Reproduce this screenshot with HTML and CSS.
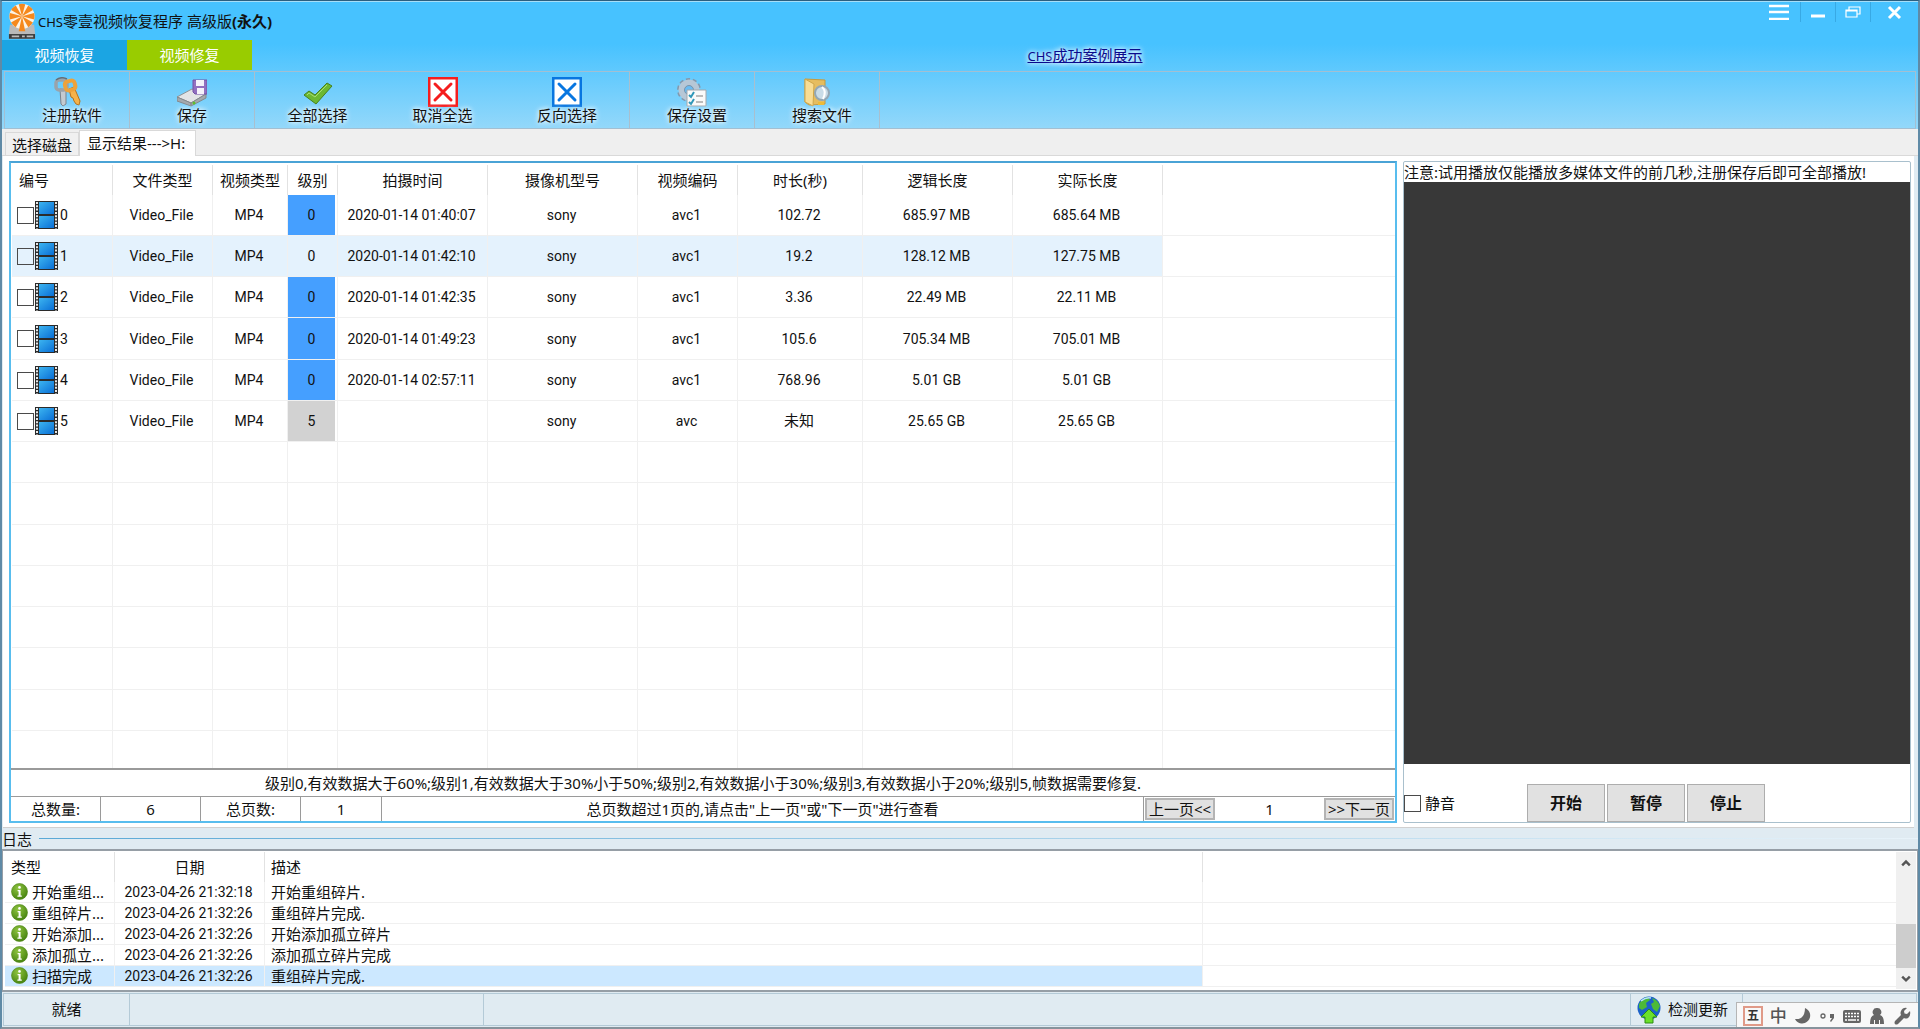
FILE: index.html
```html
<!DOCTYPE html>
<html lang="zh-CN">
<head>
    <meta charset="UTF-8">
    <meta name="viewport" content="width=device-width, initial-scale=1.0">
    <title>CHS零壹视频恢复程序</title>
    <link rel="stylesheet" href="styles.css">
</head>
<body>
    <!-- shared icons -->
    <svg width="0" height="0" class="sprite" aria-hidden="true">
        <defs>
            <linearGradient id="filmBlue" x1="0" y1="0" x2="1" y2="1">
                <stop offset="0" stop-color="#3cb4f0"/>
                <stop offset="1" stop-color="#0a6fd6"/>
            </linearGradient>
            <radialGradient id="infoGreen" cx="0.4" cy="0.3" r="0.8">
                <stop offset="0" stop-color="#8fc440"/>
                <stop offset="1" stop-color="#3f7d0a"/>
            </radialGradient>
        </defs>
        <symbol id="film" viewBox="0 0 23 28">
            <rect x="0" y="0" width="23" height="28" fill="#2b2b2b"/>
            <rect x="4" y="1" width="15" height="12" fill="url(#filmBlue)"/>
            <rect x="4" y="15" width="15" height="12" fill="url(#filmBlue)"/>
            <path d="M2 1v27M21 1v27" stroke="#e8e8e8" stroke-width="2" stroke-dasharray="2 1.3"/>
        </symbol>
        <symbol id="info" viewBox="0 0 17 17">
            <circle cx="8.5" cy="8.5" r="8" fill="url(#infoGreen)" stroke="#4c8412" stroke-width="0.6"/>
            <circle cx="8.5" cy="4.4" r="1.3" fill="#fff"/>
            <path d="M6.6 7h3v5.4h1.2v1.3H6.4v-1.3h1.2V8.3h-1z" fill="#fff"/>
        </symbol>
    </svg>

    <div class="window">
        <header class="top">
            <div class="title-bar">
                <svg class="logo" viewBox="0 0 30 38">
                    <path d="M2 23h26l1 9v6H1v-6z" fill="#b9b9b9"/>
                    <path d="M1 33h28v5H1z" fill="#3a3a3a"/>
                    <path d="M4 35.500h8M15 35.500h3M20 35.500h7" stroke="#bbb" stroke-width="2"/>
                    <circle cx="15" cy="14" r="13.500" fill="#fdf3e4"/>
                    <g fill="#f5891d">
                        <path d="M15 14 11.500 1a13.500 13.500 0 0 1 7 0z"/>
                        <path d="M15 14 21.700 2.300a13.500 13.500 0 0 1 5 5z"/>
                        <path d="M15 14 28 10.500a13.500 13.500 0 0 1 0 7z"/>
                        <path d="M15 14 26.700 20.700a13.500 13.500 0 0 1-5 5z"/>
                        <path d="M15 14 18.500 30h-7z"/>
                        <path d="M15 14 8.300 25.700a13.500 13.500 0 0 1-5-5z"/>
                        <path d="M15 14 2 17.500a13.500 13.500 0 0 1 0-7z"/>
                        <path d="M15 14 3.300 7.300a13.500 13.500 0 0 1 5-5z"/>
                    </g>
                </svg>
                <h1><span class="latin">CHS</span>零壹视频恢复程序 高级版<b>(永久)</b></h1>
                <div class="window-controls">
                    <button type="button" aria-label="菜单"><svg viewBox="0 0 20 16"><path d="M0 2h20M0 8h20M0 15h20" stroke="#fff" stroke-width="2.500"/></svg></button>
                    <button type="button" aria-label="最小化"><svg viewBox="0 0 20 16"><path d="M3 12h14" stroke="#fff" stroke-width="3"/></svg></button>
                    <button type="button" aria-label="还原"><svg viewBox="0 0 20 16"><path d="M6 6V3h11v7h-3M3 6h11v7H3zM3 7h11" fill="none" stroke="#fff" stroke-width="1.200"/></svg></button>
                    <button type="button" aria-label="关闭"><svg viewBox="0 0 20 16"><path d="M4 3l11 11M15 3L4 14" stroke="#fff" stroke-width="3"/></svg></button>
                </div>
            </div>

            <nav class="modes">
                <button type="button" class="mode recover">视频恢复</button>
                <button type="button" class="mode repair">视频修复</button>
                <div class="case-link"><a href="#"><span class="latin">CHS</span>成功案例展示</a></div>
            </nav>

            <div class="toolbar">
                <button type="button" class="tool divided indent">
                    <svg viewBox="0 0 30 30">
                        <path d="M8 12l6 1v14l-3 2-2-2z" fill="#c3cad0" stroke="#7b838b"/>
                        <rect x="4" y="3" width="11" height="10" rx="3" fill="none" stroke="#9aa3ab" stroke-width="3.500"/>
                        <path d="M4 3q5-4 11-1" fill="none" stroke="#666f78" stroke-width="1.500"/>
                        <path d="M17 12l5-2 6 14-1 4-3-1-2-3-1-3-2-1z" fill="#f5b24a" stroke="#b87118"/>
                        <rect x="13" y="4" width="10" height="9" rx="3" fill="none" stroke="#eda23a" stroke-width="4" transform="rotate(-15 18 8)"/>
                    </svg>
                    <span>注册软件</span>
                </button>
                <button type="button" class="tool divided">
                    <svg viewBox="0 0 30 30">
                        <path d="M0 20l15-8 14 5-15 9z" fill="#e2e4e6" stroke="#8d9296"/>
                        <path d="M0 20v4l14 5v-3zM29 17v4l-15 8v-3z" fill="#a4a9ad" stroke="#83888c"/>
                        <circle cx="17" cy="26" r="1.500" fill="#5cc12c"/>
                        <path d="M16 3h14v14H18l-2-2z" fill="#9270c0" stroke="#7250a6"/>
                        <path d="M19 3h8v6h-8zM20 11h7v6h-7z" fill="#f5f2fa"/>
                    </svg>
                    <span>保存</span>
                </button>
                <button type="button" class="tool">
                    <svg viewBox="0 0 30 30"><path d="M1 18l5-4 6 4L24 6l5 3-16 18z" fill="#6cb832" stroke="#47811d" stroke-linejoin="round"/><path d="M4 18l2-2 6 4L24 8" fill="none" stroke="#a7dd74"/></svg>
                    <span>全部选择</span>
                </button>
                <button type="button" class="tool">
                    <svg viewBox="0 0 30 30"><path d="M1 1h28v28H1z" fill="#fff" stroke="#f51d1d" stroke-width="3"/><path d="M7 7l16 16M23 7L7 23" stroke="#f51d1d" stroke-width="3" stroke-linecap="round"/></svg>
                    <span>取消全选</span>
                </button>
                <button type="button" class="tool divided">
                    <svg viewBox="0 0 30 30"><path d="M1 1h28v28H1z" fill="#fff" stroke="#0876e0" stroke-width="3"/><path d="M7 7l16 16M23 7L7 23" stroke="#0876e0" stroke-width="3" stroke-linecap="round"/></svg>
                    <span>反向选择</span>
                </button>
                <button type="button" class="tool divided indent">
                    <svg viewBox="0 0 30 30">
                        <circle cx="12" cy="13" r="10.500" fill="none" stroke="#8398ad" stroke-width="3" stroke-dasharray="4 2.600"/>
                        <circle cx="12" cy="13" r="7.500" fill="none" stroke="#b7c7d6" stroke-width="6"/>
                        <circle cx="12" cy="13" r="4.500" fill="#6bbcf2" stroke="#7e93a8"/>
                        <path d="M10 13h19v16H10z" fill="#fafafa" stroke="#a3a8ad"/>
                        <path d="M19 19h7M19 25h7" stroke="#bbb" stroke-width="2"/>
                        <path d="M12 18l2 2 3-5M12 25l2 2 3-5" fill="none" stroke="#2f97b8" stroke-width="2"/>
                    </svg>
                    <span>保存设置</span>
                </button>
                <button type="button" class="tool divided indent">
                    <svg viewBox="0 0 30 30">
                        <path d="M3 2l20 1v24l-16 1-4-3z" fill="#e6bd5f" stroke="#c69a3c"/>
                        <path d="M3 2l9 5-1 22-8-4z" fill="#f9dd94" stroke="#cfa64a"/>
                        <circle cx="20" cy="16" r="7" fill="#c9dce8" stroke="#93a7b5" stroke-width="2"/>
                        <path d="M20 10q5 4 1 12" fill="none" stroke="#fff" stroke-width="2"/>
                        <path d="M16 25h6v3h-6z" fill="#eebb35"/>
                    </svg>
                    <span>搜索文件</span>
                </button>
            </div>
        </header>

        <div class="tabs">
            <button type="button" class="tab">选择磁盘</button>
            <button type="button" class="tab active">显示结果---&gt;H:</button>
        </div>

        <main class="page">
            <section class="results">
                <div class="grid-box">
                    <table class="grid">
                        <colgroup>
                            <col class="w-101"><col class="w-100"><col class="w-75"><col class="w-50"><col class="w-150"><col class="w-150"><col class="w-100"><col class="w-125"><col class="w-150"><col class="w-150"><col>
                        </colgroup>
                        <thead>
                            <tr><th>编号</th><th>文件类型</th><th>视频类型</th><th>级别</th><th>拍摄时间</th><th>摄像机型号</th><th>视频编码</th><th>时长(秒)</th><th>逻辑长度</th><th>实际长度</th><th></th></tr>
                        </thead>
                        <tbody>
                            <tr>
                                <td><label class="pick"><input type="checkbox"><svg><use href="#film"/></svg>0</label></td>
                                <td>Video_File</td><td>MP4</td><td class="level good">0</td><td>2020-01-14 01:40:07</td><td>sony</td><td>avc1</td><td>102.72</td><td>685.97 MB</td><td>685.64 MB</td><td></td>
                            </tr>
                            <tr class="hover">
                                <td><label class="pick"><input type="checkbox"><svg><use href="#film"/></svg>1</label></td>
                                <td>Video_File</td><td>MP4</td><td>0</td><td>2020-01-14 01:42:10</td><td>sony</td><td>avc1</td><td>19.2</td><td>128.12 MB</td><td>127.75 MB</td><td></td>
                            </tr>
                            <tr>
                                <td><label class="pick"><input type="checkbox"><svg><use href="#film"/></svg>2</label></td>
                                <td>Video_File</td><td>MP4</td><td class="level good">0</td><td>2020-01-14 01:42:35</td><td>sony</td><td>avc1</td><td>3.36</td><td>22.49 MB</td><td>22.11 MB</td><td></td>
                            </tr>
                            <tr>
                                <td><label class="pick"><input type="checkbox"><svg><use href="#film"/></svg>3</label></td>
                                <td>Video_File</td><td>MP4</td><td class="level good">0</td><td>2020-01-14 01:49:23</td><td>sony</td><td>avc1</td><td>105.6</td><td>705.34 MB</td><td>705.01 MB</td><td></td>
                            </tr>
                            <tr>
                                <td><label class="pick"><input type="checkbox"><svg><use href="#film"/></svg>4</label></td>
                                <td>Video_File</td><td>MP4</td><td class="level good">0</td><td>2020-01-14 02:57:11</td><td>sony</td><td>avc1</td><td>768.96</td><td>5.01 GB</td><td>5.01 GB</td><td></td>
                            </tr>
                            <tr>
                                <td><label class="pick"><input type="checkbox"><svg><use href="#film"/></svg>5</label></td>
                                <td>Video_File</td><td>MP4</td><td class="level broken">5</td><td></td><td>sony</td><td>avc</td><td class="cjk">未知</td><td>25.65 GB</td><td>25.65 GB</td><td></td>
                            </tr>
                            <tr><td></td><td></td><td></td><td></td><td></td><td></td><td></td><td></td><td></td><td></td><td></td></tr>
                            <tr><td></td><td></td><td></td><td></td><td></td><td></td><td></td><td></td><td></td><td></td><td></td></tr>
                            <tr><td></td><td></td><td></td><td></td><td></td><td></td><td></td><td></td><td></td><td></td><td></td></tr>
                            <tr><td></td><td></td><td></td><td></td><td></td><td></td><td></td><td></td><td></td><td></td><td></td></tr>
                            <tr><td></td><td></td><td></td><td></td><td></td><td></td><td></td><td></td><td></td><td></td><td></td></tr>
                            <tr><td></td><td></td><td></td><td></td><td></td><td></td><td></td><td></td><td></td><td></td><td></td></tr>
                            <tr><td></td><td></td><td></td><td></td><td></td><td></td><td></td><td></td><td></td><td></td><td></td></tr>
                            <tr><td></td><td></td><td></td><td></td><td></td><td></td><td></td><td></td><td></td><td></td><td></td></tr>
                        </tbody>
                    </table>
                </div>
                <p class="legend">级别0,有效数据大于60%;级别1,有效数据大于30%小于50%;级别2,有效数据小于30%;级别3,有效数据小于20%;级别5,帧数据需要修复.</p>
                <div class="pager">
                    <div class="pager-cell w-90">总数量:</div>
                    <div class="pager-cell w-100">6</div>
                    <div class="pager-cell w-100">总页数:</div>
                    <div class="pager-cell w-81">1</div>
                    <div class="pager-cell hint">总页数超过1页的,请点击"上一页"或"下一页"进行查看</div>
                    <div class="pager-nav">
                        <button type="button">上一页&lt;&lt;</button>
                        <span>1</span>
                        <button type="button">&gt;&gt;下一页</button>
                    </div>
                </div>
            </section>

            <aside class="player">
                <p class="notice">注意:试用播放仅能播放多媒体文件的前几秒,注册保存后即可全部播放!</p>
                <div class="screen"></div>
                <div class="controls">
                    <label class="mute"><input type="checkbox">静音</label>
                    <button type="button">开始</button>
                    <button type="button">暂停</button>
                    <button type="button">停止</button>
                </div>
            </aside>
        </main>

        <section class="log">
            <h2>日志</h2>
            <div class="log-box">
                <table class="log-table">
                    <colgroup>
                        <col class="w-110"><col class="w-150"><col class="log-desc"><col>
                    </colgroup>
                    <thead>
                        <tr><th>类型</th><th>日期</th><th>描述</th><th></th></tr>
                    </thead>
                    <tbody>
                        <tr><td><svg><use href="#info"/></svg>开始重组...</td><td>2023-04-26 21:32:18</td><td>开始重组碎片.</td><td></td></tr>
                        <tr><td><svg><use href="#info"/></svg>重组碎片...</td><td>2023-04-26 21:32:26</td><td>重组碎片完成.</td><td></td></tr>
                        <tr><td><svg><use href="#info"/></svg>开始添加...</td><td>2023-04-26 21:32:26</td><td>开始添加孤立碎片</td><td></td></tr>
                        <tr><td><svg><use href="#info"/></svg>添加孤立...</td><td>2023-04-26 21:32:26</td><td>添加孤立碎片完成</td><td></td></tr>
                        <tr class="selected"><td><svg><use href="#info"/></svg>扫描完成</td><td>2023-04-26 21:32:26</td><td>重组碎片完成.</td><td></td></tr>
                    </tbody>
                </table>
                <div class="scrollbar">
                    <svg viewBox="0 0 20 22"><path d="M6 14l4-4 4 4" fill="none" stroke="#555" stroke-width="2.500"/></svg>
                    <div class="thumb"></div>
                    <svg viewBox="0 0 20 22"><path d="M6 9l4 4 4-4" fill="none" stroke="#555" stroke-width="2.500"/></svg>
                </div>
            </div>
        </section>

        <footer class="status">
            <div class="status-cell w-126">就绪</div>
            <div class="status-cell w-354"></div>
            <div class="status-cell fill"></div>
            <div class="status-cell update">
                <svg viewBox="0 0 24 28">
                    <circle cx="12" cy="12" r="11.500" fill="#1c62c8"/>
                    <path d="M2 8q3-6 9-7l2 3-4 3 1 4-5 3-3-2zM15 2q6 2 8 8l-3 6-4-3-2-5 3-2z" fill="#4cba38"/>
                    <path d="M4 5q5-4 10-3" fill="none" stroke="#b8e2ff" stroke-width="1.500"/>
                    <path d="M12 13l8 8h-4v6H8v-6H4z" fill="#6be02c" stroke="#2c8c14"/>
                </svg>
                <span>检测更新</span>
            </div>
            <div class="status-cell version">版本</div>
        </footer>

        <div class="ime">
            <span class="ime-mark">五</span>
            <span class="ime-lang">中</span>
            <svg viewBox="0 0 18 18"><path d="M11 1a8 8 0 1 1-10 11q10 1 10-11z" fill="#666"/></svg>
            <svg viewBox="0 0 18 18"><circle cx="5" cy="9" r="2" fill="none" stroke="#666" stroke-width="1.300"/><path d="M12 7h4v4l-3 4-1-1 2-3h-2z" fill="#666"/></svg>
            <svg viewBox="0 0 18 18"><rect x="0" y="3" width="18" height="13" rx="2" fill="#666"/><path d="M2 6.500h14M2 9.500h14" stroke="#fff" stroke-width="1.500" stroke-dasharray="2 1"/><path d="M2 13h2M5 13h8M14 13h2" stroke="#fff" stroke-width="1.500"/></svg>
            <svg viewBox="0 0 18 18"><path d="M9 1a4 4 0 0 1 3 7q4 1 4 9h-4v-4h-1v4H7v-4H6v4H2q0-8 4-9a4 4 0 0 1 3-7z" fill="#666"/></svg>
            <svg viewBox="0 0 18 18"><path d="M14 1l-3 3 .5 2.500 2.500.5 3-3q1 5-2 7-2 1-4 0l-6 6q-2 1-3 0t0-3l6-6q-1-2 0-4 2-4 6-3z" fill="#666"/></svg>
        </div>
    </div>
</body>
</html>
```

FILE: styles.css
```css
* {
    margin: 0;
    padding: 0;
    box-sizing: border-box;
}

body {
    font-family: "Noto Sans", "Noto Sans CJK SC", sans-serif;
    font-size: 15px;
    line-height: 20px;
    color: #111;
    background: #e0ebf2;
}

button, input {
    font: inherit;
    color: inherit;
}

button {
    border: 0;
    background: none;
}

.sprite {
    position: absolute;
}

.window {
    position: relative;
    display: flex;
    flex-direction: column;
    min-height: 100vh;
    border: 2px solid #5f8aa6;
    border-top: 1px solid #2b5f80;
    border-bottom-color: #87939c;
    overflow: hidden;
}

.latin {
    font-size: 13px;
}

/* header */
.top {
    border-top: 1px solid #a6def9;
    background: linear-gradient(180deg, #47c2ff 0, #47c2ff 42px, #94d8fa 100%);
}

.title-bar {
    display: flex;
    align-items: center;
    height: 38px;
    padding-left: 6px;
}

.logo {
    width: 28px;
    height: 38px;
}

.title-bar h1 {
    flex: 1;
    padding-left: 2px;
    font-size: 15px;
    font-weight: 400;
}

.window-controls {
    display: flex;
    align-self: flex-start;
}

.window-controls button {
    width: 35px;
    height: 20px;
    border-left: 1px solid #38a9e4;
}

.window-controls button:first-child {
    width: 42px;
    border-left: 0;
}

.window-controls button:last-child {
    width: 48px;
}

.window-controls svg {
    display: block;
    width: 20px;
    height: 16px;
    margin: 0 auto;
}

.modes {
    display: flex;
    height: 31px;
    line-height: 30px;
}

.mode {
    width: 125px;
    height: 30px;
    color: #fff;
}

.recover {
    background: #1ba5e3;
}

.repair {
    background: #9c0;
}

.case-link {
    flex: 1;
    text-align: center;
}

.case-link a {
    color: #0a0a8c;
    text-shadow: 0 0 4px #fff, 0 0 6px #fff;
}

.toolbar {
    display: flex;
    margin: 0 2px;
    border: 1px solid #a3bfd2;
}

.tool {
    display: flex;
    flex-direction: column;
    align-items: center;
    width: 125px;
    height: 56px;
    padding-top: 5px;
}

.tool.divided {
    border-right: 1px solid #a9bfce;
}

.tool svg {
    width: 30px;
    height: 30px;
}

.tool span {
    line-height: 16px;
    text-shadow: 0 0 4px #fff, 0 0 6px #fff;
}

.tool.indent span {
    padding-left: 10px;
}

/* page tabs */
.tabs {
    display: flex;
    align-items: flex-end;
    height: 27px;
    padding-left: 3px;
    background: #efefef;
    border-bottom: 1px solid #d9d9d9;
}

.tab {
    height: 23px;
    padding: 2px 6px 0;
    border: 1px solid #d9d9d9;
    border-bottom: 0;
    background: #f0f0f0;
}

.tab.active {
    height: 26px;
    margin-bottom: -1px;
    padding: 0 10px 2px 7px;
    background: #fff;
}

/* results page */
.page {
    flex: 1;
    display: flex;
    gap: 6px;
    margin: 0 4px 0 1px;
    padding: 5px 3px 4px 6px;
    background: #fff;
    border-bottom: 1px solid #d0d0d0;
}

.results {
    flex: 1;
    min-width: 0;
    display: flex;
    flex-direction: column;
    border: 2px solid #58bdee;
    border-top-color: #4aa3d6;
}

.grid-box {
    flex: 1 1 0;
    overflow: hidden;
    padding: 2px 0 0 1px;
    border-bottom: 2px solid #9a9a9a;
}

.grid, .log-table {
    width: 100%;
    table-layout: fixed;
    border-collapse: separate;
    border-spacing: 0;
}

.w-50 { width: 50px; }
.w-75 { width: 75px; }
.w-81 { width: 81px; }
.w-90 { width: 90px; }
.w-100 { width: 100px; }
.w-101 { width: 101px; }
.w-110 { width: 110px; }
.w-125 { width: 125px; }
.w-126 { width: 126px; }
.w-150 { width: 150px; }
.w-354 { width: 354px; }
.log-desc { width: 938px; }

th {
    height: 30px;
    font-weight: 400;
    border-right: 1px solid #e2e2e2;
}

th:last-child {
    border-right: 0;
}

.grid th:first-child {
    padding-left: 7px;
    text-align: left;
}

.grid td {
    height: 41px;
    padding-right: 2px;
    font-family: Roboto, "Noto Sans CJK SC", sans-serif;
    font-size: 14px;
    text-align: center;
    border-right: 1px solid #f0f0f0;
    border-bottom: 1px solid #f0f0f0;
}

.grid td:last-child,
.log-table td:last-child {
    border-right: 0;
}

/* keeps the 41/42 row rhythm of the list */
.grid tr:nth-child(4n) td {
    height: 42px;
}

.grid .cjk {
    font-size: 15px;
}

.grid .level {
    background-clip: content-box;
}

.level.good { background-color: #459fff; }
.level.broken { background-color: #d2d2d2; }

.hover td:not(:last-child) {
    background: #e4f2fd;
}

.pick {
    display: flex;
    align-items: center;
    padding-left: 5px;
}

.pick svg {
    width: 23px;
    height: 28px;
    margin: 0 2px 0 1px;
}

input[type="checkbox"] {
    appearance: none;
    width: 17px;
    height: 17px;
    border: 1px solid #4a4a4a;
}

.legend {
    height: 26px;
    line-height: 26px;
    text-align: center;
}

.pager {
    display: flex;
    height: 25px;
    line-height: 24px;
    border-top: 1px solid #9a9a9a;
    text-align: center;
}

.pager-cell {
    border-right: 1px solid #9a9a9a;
}

.hint {
    flex: 1;
}

.pager-nav {
    display: flex;
    align-items: center;
    justify-content: space-between;
    width: 251px;
    padding: 0 1px;
}

.pager-nav button {
    width: 70px;
    height: 22px;
    line-height: 18px;
    border: 2px solid #b4b4b4;
    background: #e1e1e1;
    white-space: nowrap;
}

/* preview player */
.player {
    flex: 0 0 508px;
    display: flex;
    flex-direction: column;
    border: 1px solid #a9c0cd;
    border-radius: 2px;
}

.notice {
    height: 20px;
    white-space: nowrap;
}

.screen {
    flex: 1;
    background: #383838;
}

.controls {
    display: flex;
    align-items: flex-end;
    gap: 2px;
    height: 58px;
}

.mute {
    display: flex;
    align-items: center;
    gap: 4px;
    width: 121px;
    height: 38px;
}

.controls button {
    width: 78px;
    height: 38px;
    border: 1px solid #adadad;
    background: #e1e1e1;
    font-size: 16px;
    font-weight: 700;
}

/* log */
.log h2 {
    display: flex;
    align-items: center;
    gap: 7px;
    height: 21px;
    font-size: 15px;
    font-weight: 400;
}

.log h2::after {
    content: "";
    flex: 1;
    height: 1px;
    background: linear-gradient(90deg, #5aa9d6, #e8f3fa);
}

.log-box {
    display: flex;
    height: 143px;
    padding: 1px 1px 1px 2px;
    border: 2px solid #969ea6;
    border-left-width: 1px;
    border-right-width: 1px;
    background: #fff;
}

.log-table {
    flex: 1;
    width: auto;
    align-self: flex-start;
}

.log-table th {
    text-align: left;
    padding-left: 6px;
}

.log-table th:nth-child(2) {
    text-align: center;
    padding-left: 0;
}

.log-table td {
    height: 21px;
    line-height: 18px;
    padding-left: 6px;
    border-right: 1px solid #f0f0f0;
    border-bottom: 1px solid #f0f0f0;
    white-space: nowrap;
}

.log-table td:nth-child(2) {
    padding: 0 2px 0 0;
    font-family: Roboto, sans-serif;
    font-size: 14px;
    text-align: center;
}

.log-table svg {
    width: 17px;
    height: 17px;
    margin-right: 4px;
    vertical-align: top;
}

.selected td:not(:last-child) {
    background: #cce8ff;
}

.scrollbar {
    display: flex;
    flex-direction: column;
    width: 20px;
    background: #f0f0f0;
}

.scrollbar svg {
    width: 20px;
    height: 21px;
}

.thumb {
    height: 44px;
    margin-top: auto;
    background: #cdcdcd;
}

/* status bar */
.status {
    display: flex;
    height: 33px;
    margin: 1px;
    border: 1px solid #b4cad7;
    line-height: 31px;
}

.status-cell {
    border-right: 1px solid #b4cad7;
    text-align: center;
}

.fill {
    flex: 1;
}

.update {
    display: flex;
    align-items: center;
    gap: 7px;
    width: 112px;
    padding-left: 6px;
}

.update svg {
    width: 24px;
    height: 28px;
}

.version {
    width: 173px;
    padding-left: 3px;
    border-right: 0;
    text-align: left;
}

/* input method bar floating over the status bar */
.ime {
    position: absolute;
    right: -2px;
    bottom: -2px;
    display: flex;
    align-items: center;
    justify-content: space-between;
    width: 184px;
    height: 27px;
    padding: 0 8px 0 6px;
    border: 1px solid #b5b5b5;
    background: #f8f8f8;
    color: #555;
}

.ime svg {
    width: 18px;
    height: 18px;
}

.ime-mark {
    width: 20px;
    height: 20px;
    border: 2px solid #e09a88;
    font-size: 12px;
    font-weight: 700;
    line-height: 16px;
    text-align: center;
    color: #333;
}

.ime-lang {
    font-size: 17px;
    font-weight: 500;
}
```
